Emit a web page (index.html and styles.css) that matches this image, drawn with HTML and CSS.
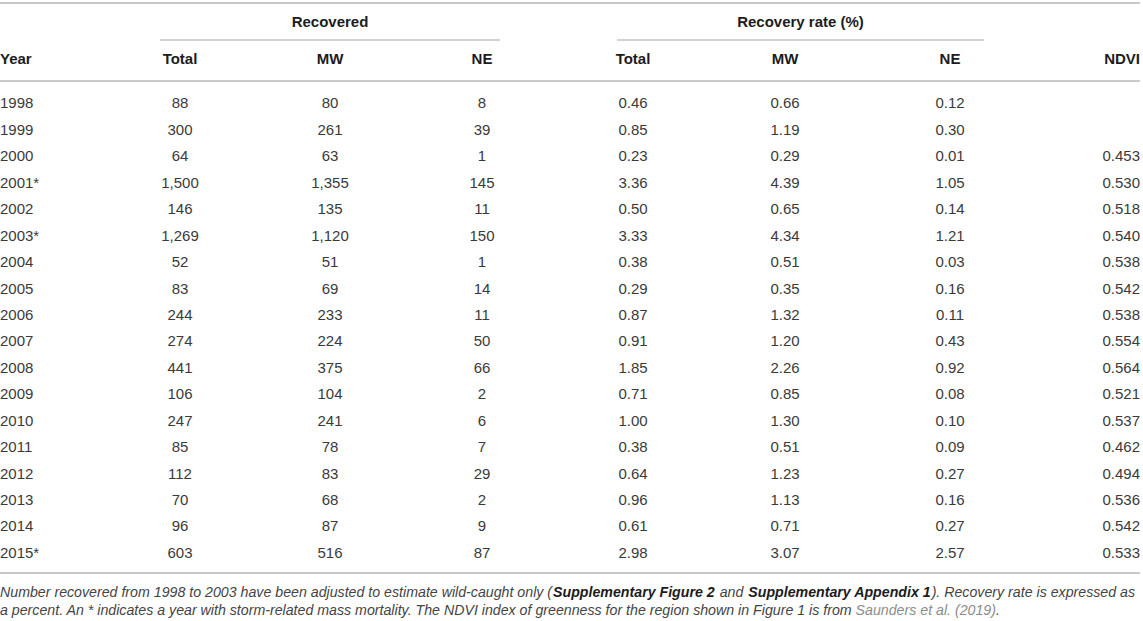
FILE: index.html
```html
<!DOCTYPE html>
<html lang="en">
<head>
<meta charset="utf-8">
<title>Recovery table</title>
<link rel="stylesheet" href="styles.css">
</head>
<body>
<div class="wrap">
<table class="data">
  <colgroup>
    <col class="c-year"><col class="c-rt"><col class="c-rmw"><col class="c-rne">
    <col class="c-pt"><col class="c-pmw"><col class="c-pne"><col class="c-ndvi">
  </colgroup>
  <thead>
    <tr class="grp">
      <th class="empty"></th>
      <th colspan="3" class="gcell"><div class="group g-rec">Recovered</div></th>
      <th colspan="3" class="gcell"><div class="group g-rate">Recovery rate (%)</div></th>
      <th class="empty"></th>
    </tr>
    <tr class="hdr">
      <th class="left">Year</th>
      <th>Total</th><th>MW</th><th>NE</th>
      <th>Total</th><th>MW</th><th>NE</th>
      <th class="right">NDVI</th>
    </tr>
  </thead>
  <tbody>
    <tr><td class="left">1998</td><td>88</td><td>80</td><td>8</td><td>0.46</td><td>0.66</td><td>0.12</td><td class="right"></td></tr>
    <tr><td class="left">1999</td><td>300</td><td>261</td><td>39</td><td>0.85</td><td>1.19</td><td>0.30</td><td class="right"></td></tr>
    <tr><td class="left">2000</td><td>64</td><td>63</td><td>1</td><td>0.23</td><td>0.29</td><td>0.01</td><td class="right">0.453</td></tr>
    <tr><td class="left">2001*</td><td>1,500</td><td>1,355</td><td>145</td><td>3.36</td><td>4.39</td><td>1.05</td><td class="right">0.530</td></tr>
    <tr><td class="left">2002</td><td>146</td><td>135</td><td>11</td><td>0.50</td><td>0.65</td><td>0.14</td><td class="right">0.518</td></tr>
    <tr><td class="left">2003*</td><td>1,269</td><td>1,120</td><td>150</td><td>3.33</td><td>4.34</td><td>1.21</td><td class="right">0.540</td></tr>
    <tr><td class="left">2004</td><td>52</td><td>51</td><td>1</td><td>0.38</td><td>0.51</td><td>0.03</td><td class="right">0.538</td></tr>
    <tr><td class="left">2005</td><td>83</td><td>69</td><td>14</td><td>0.29</td><td>0.35</td><td>0.16</td><td class="right">0.542</td></tr>
    <tr><td class="left">2006</td><td>244</td><td>233</td><td>11</td><td>0.87</td><td>1.32</td><td>0.11</td><td class="right">0.538</td></tr>
    <tr><td class="left">2007</td><td>274</td><td>224</td><td>50</td><td>0.91</td><td>1.20</td><td>0.43</td><td class="right">0.554</td></tr>
    <tr><td class="left">2008</td><td>441</td><td>375</td><td>66</td><td>1.85</td><td>2.26</td><td>0.92</td><td class="right">0.564</td></tr>
    <tr><td class="left">2009</td><td>106</td><td>104</td><td>2</td><td>0.71</td><td>0.85</td><td>0.08</td><td class="right">0.521</td></tr>
    <tr><td class="left">2010</td><td>247</td><td>241</td><td>6</td><td>1.00</td><td>1.30</td><td>0.10</td><td class="right">0.537</td></tr>
    <tr><td class="left">2011</td><td>85</td><td>78</td><td>7</td><td>0.38</td><td>0.51</td><td>0.09</td><td class="right">0.462</td></tr>
    <tr><td class="left">2012</td><td>112</td><td>83</td><td>29</td><td>0.64</td><td>1.23</td><td>0.27</td><td class="right">0.494</td></tr>
    <tr><td class="left">2013</td><td>70</td><td>68</td><td>2</td><td>0.96</td><td>1.13</td><td>0.16</td><td class="right">0.536</td></tr>
    <tr><td class="left">2014</td><td>96</td><td>87</td><td>9</td><td>0.61</td><td>0.71</td><td>0.27</td><td class="right">0.542</td></tr>
    <tr><td class="left">2015*</td><td>603</td><td>516</td><td>87</td><td>2.98</td><td>3.07</td><td>2.57</td><td class="right">0.533</td></tr>
  </tbody>
</table>
<p class="note">Number recovered from 1998 to 2003 have been adjusted to estimate wild-caught only (<b>Supplementary Figure 2</b> and <b>Supplementary Appendix 1</b>). Recovery rate is expressed as a percent. An * indicates a year with storm-related mass mortality. The NDVI index of greenness for the region shown in Figure 1 is from <span class="ref">Saunders et al. (2019)</span>.</p>
</div>
</body>
</html>
```

FILE: styles.css
```css
html, body {
  margin: 0;
  padding: 0;
  background: #ffffff;
}

.wrap {
  width: 1140px;
  padding-top: 2px;
  font-family: "Liberation Sans", Arial, Helvetica, sans-serif;
}

.data {
  width: 1140px;
  table-layout: fixed;
  border-collapse: separate;
  border-spacing: 0;
  border-top: 2px solid #c9c9c9;
  font-size: 15px;
  color: #3a3a3a;
}

.c-year { width: 130px; }
.c-rt { width: 100px; }
.c-rmw { width: 200px; }
.c-rne { width: 104px; }
.c-pt { width: 198px; }
.c-pmw { width: 106px; }
.c-pne { width: 224px; }
.c-ndvi { width: 78px; }

.data th,
.data td {
  padding: 0;
  line-height: 18px;
  text-align: center;
  white-space: nowrap;
  overflow: visible;
}

.data th {
  font-weight: bold;
  color: #1c1c1c;
}

.data .left { text-align: left; }
.data .right { text-align: right; }

.grp .gcell { padding: 0; }

.group {
  padding: 9px 0 8px;
  border-bottom: 2px solid #d2d2d2;
}

.g-rec { margin: 0 34px 0 30px; }
.g-rate { margin: 0 78px 0 83px; }

.hdr th {
  padding: 9px 0 12px;
  border-bottom: 2px solid #c9c9c9;
}

.data tbody td {
  padding: 4.225px 0;
}

.data tbody tr:first-child td {
  padding-top: 12.475px;
}

.data tbody tr:last-child td {
  padding-bottom: 9.825px;
  border-bottom: 2px solid #c9c9c9;
}

.note {
  margin: 0;
  padding-top: 9px;
  width: 1143px;
  font-size: 14.2px;
  line-height: 18px;
  font-style: italic;
  color: #444444;
}

.note b {
  font-weight: bold;
  color: #1c1c1c;
  padding: 0 1px;
}

.ref {
  color: #8c8c8c;
}
```
